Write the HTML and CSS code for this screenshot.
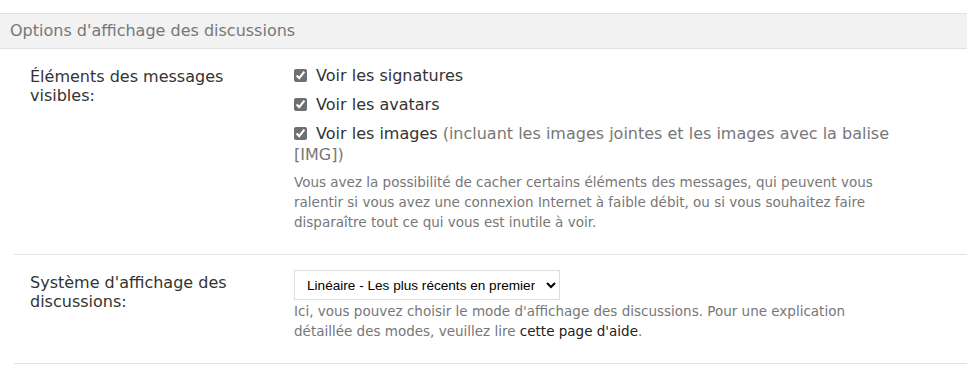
FILE: index.html
```html
<!DOCTYPE html>
<html lang="fr">

<head>
    <meta charset="UTF-8">
    <meta name="viewport" content="width=device-width, initial-scale=1.0">
    <title>Options d'affichage des discussions</title>
    <link rel="stylesheet" href="styles.css">
</head>

<body>
    <div class="panel">
        <h3 class="panel-head">Options d'affichage des discussions</h3>

        <dl class="option-row">
            <dt>Éléments des messages visibles:</dt>
            <dd>
                <ul class="check-list">
                    <li>
                        <label><input type="checkbox" checked> Voir les signatures</label>
                    </li>
                    <li>
                        <label><input type="checkbox" checked> Voir les avatars</label>
                    </li>
                    <li>
                        <label><input type="checkbox" checked> Voir les images <span class="hint">(incluant les images jointes et les images avec la balise [IMG])</span></label>
                    </li>
                </ul>
                <p class="explain">Vous avez la possibilité de cacher certains éléments des messages, qui peuvent vous ralentir si vous avez une connexion Internet à faible débit, ou si vous souhaitez faire disparaître tout ce qui vous est inutile à voir.</p>
            </dd>
        </dl>

        <dl class="option-row">
            <dt>Système d'affichage des discussions:</dt>
            <dd>
                <select class="mode-select">
                    <option>Linéaire - Les plus récents en premier</option>
                    <option>Linéaire - Les plus anciens en premier</option>
                    <option>Hybride</option>
                    <option>Arborescent</option>
                </select>
                <p class="explain">Ici, vous pouvez choisir le mode d'affichage des discussions. Pour une explication détaillée des modes, veuillez lire <a href="#">cette page d'aide</a>.</p>
            </dd>
        </dl>
    </div>
</body>

</html>
```

FILE: styles.css
```css
body {
    font-family: "DejaVu Sans", Verdana, sans-serif;
    color: #333;
    background-color: #fff;
    margin: 0;
    padding: 13px 0 0 0;
}

.panel-head {
    margin: 0;
    padding: 8px 10px 8px;
    font-size: 16px;
    line-height: 18px;
    font-weight: normal;
    color: #777;
    background-color: #f2f2f2;
    border-top: 1px solid #e0e0e0;
    border-bottom: 1px solid #e0e0e0;
}

.option-row {
    display: flex;
    margin: 0 0 0 14px;
    padding: 16px 0 22px;
    border-bottom: 1px solid #e3e3e3;
}

.option-row + .option-row {
    padding-top: 15px;
}

.option-row dt {
    width: 244px;
    padding: 0 20px 0 16px;
    font-size: 16px;
    line-height: 19px;
    margin-top: 2px;
}

.option-row + .option-row dt {
    margin-top: 3px;
}

.option-row dd {
    flex: 1;
    margin: 0;
    padding-right: 60px;
}

.check-list {
    list-style: none;
    margin: 0;
    padding: 0;
}

.check-list li {
    font-size: 16px;
    line-height: 21px;
    margin-bottom: 8px;
}

.check-list li:last-child {
    margin-bottom: 7px;
}

.check-list input {
    accent-color: #6f6f6f;
    margin: 0 4px 0 0;
    width: 13px;
    height: 13px;
    vertical-align: -1px;
}

.hint {
    color: #777;
}

.explain {
    margin: 0;
    font-size: 13.5px;
    line-height: 20px;
    color: #777;
}

.explain a {
    color: #222;
    text-decoration: none;
}

.mode-select {
    font-family: Tahoma, "Liberation Sans", Arial, sans-serif;
    font-size: 13.6px;
    color: #000;
    width: 266px;
    height: 30px;
    padding: 0 8px;
    border: 1px solid #ddd;
    border-radius: 0;
    background-color: #fff;
    margin-bottom: 1px;
    display: block;
}
```
